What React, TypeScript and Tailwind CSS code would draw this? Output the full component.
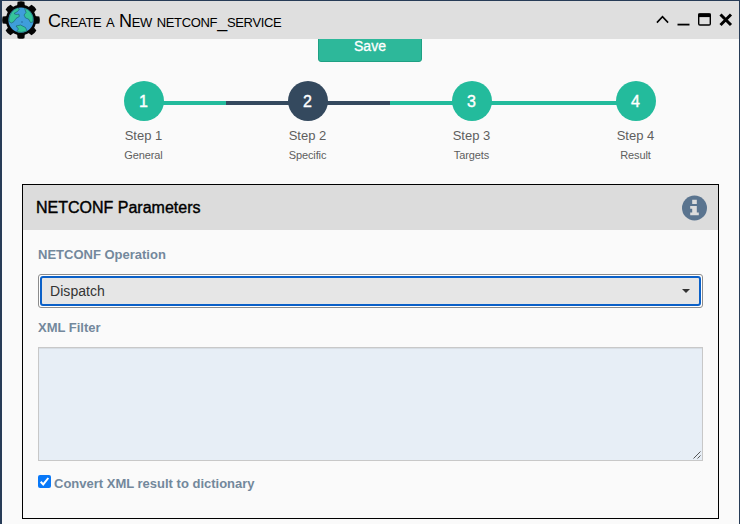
import React from "react";

type Step = { n: number; title: string; caption: string; left: string; right: string; dot: string };

const steps: Step[] = [
  { n: 1, title: "Step 1", caption: "General", left: "bg-transparent", right: "bg-[#23bb9c]", dot: "bg-[#23bb9c]" },
  { n: 2, title: "Step 2", caption: "Specific", left: "bg-[#34495e]", right: "bg-[#34495e]", dot: "bg-[#34495e]" },
  { n: 3, title: "Step 3", caption: "Targets", left: "bg-[#23bb9c]", right: "bg-[#23bb9c]", dot: "bg-[#23bb9c]" },
  { n: 4, title: "Step 4", caption: "Result", left: "bg-[#23bb9c]", right: "bg-transparent", dot: "bg-[#23bb9c]" },
];

function GearGlobe() {
  return (
    <svg className="block h-[38px] w-[38px] shrink-0" viewBox="0 0 38 38">
      <g fill="#050505">
        {[0, 45, 90, 135, 180, 225, 270, 315].map((a) => (
          <path key={a} d="M15 6 L15.6 0.7 Q19 -0.3 22.4 0.7 L23 6 Z" transform={`rotate(${a} 19 19)`} />
        ))}
        <circle cx="19" cy="19" r="15.2" />
      </g>
      <circle cx="19" cy="19" r="12.6" fill="#3f9edb" />
      <g fill="#35c49c" stroke="#1d5a6c" strokeWidth="0.6">
        <path d="M7 17.5 Q8.5 9.5 15.5 7 L17.5 8 L15.5 10.5 L12 12.5 L14 13.5 L17 13.2 L17.3 15.5 L14 17.5 L12 20.5 L9.5 22 L7 20.5 Z" />
        <path d="M22.5 7 Q29 9.5 31 16 L31 21 L28.5 21.5 L26.5 18 L23.5 17 L22 14 L24 11.5 Z" />
        <path d="M14 25 L18.5 24 L23.5 26.5 L25 30 Q19 32.5 14.5 30.5 L16.5 28 Z" />
      </g>
      <circle cx="20" cy="21" r="0.8" fill="#24699d" />
    </svg>
  );
}

function WindowControls() {
  return (
    <svg className="ml-auto block h-[38px] w-[80px] shrink-0" viewBox="656 1 80 38" fill="none" stroke="#000">
      <path d="M656.9 22.6 L662.5 16.7 L668.1 22.6" strokeWidth="1.6" />
      <path d="M677.5 24.6 H689.5" strokeWidth="1.8" />
      <rect x="698.7" y="14" width="11.6" height="11" rx="1.2" strokeWidth="1.4" />
      <path d="M698.3 15.3 H710.7" strokeWidth="3.6" />
      <path d="M720.5 14.5 L731 25 M731 14.5 L720.5 25" strokeWidth="3" />
    </svg>
  );
}

export default function App() {
  return (
    <div className="flex h-[524px] w-[740px] flex-col overflow-hidden border-t border-r border-l-2 border-[#273c57] bg-[#fafafa] font-['Liberation_Sans',Arial,sans-serif]">
      <header className="flex h-[38px] shrink-0 items-center bg-[#dfdfdf] pr-[3px]">
        <GearGlobe />
        <h1 className="ml-[8px] pt-[2px] text-[18px] leading-[22px] tracking-[-0.33px] whitespace-nowrap text-black [font-variant:small-caps]">
          Create a New netconf_service
        </h1>
        <WindowControls />
      </header>

      <div className="flex h-[23px] shrink-0 justify-center overflow-hidden pr-px">
        <button className="-mt-[10px] h-[33px] w-[104px] rounded-[3px] border border-[#1fa083] bg-[#2db89a] text-[14px] leading-[30px] text-white [-webkit-text-stroke:0.3px_white]">
          Save
        </button>
      </div>

      <ol className="mt-[19px] ml-[60px] flex shrink-0">
        {steps.map((s) => (
          <li key={s.n} className="flex w-[164px] flex-col items-center text-[#5e5e5e]">
            <div className="flex w-full items-center">
              <span className={`mt-[4px] -mr-px h-[4px] flex-1 ${s.left}`} />
              <span className={`flex h-[40px] w-[40px] items-center justify-center rounded-full pt-px pr-px text-[16px] text-white [-webkit-text-stroke:0.4px_white] ${s.dot}`}>
                {s.n}
              </span>
              <span className={`mt-[4px] -ml-px h-[4px] flex-1 ${s.right}`} />
            </div>
            <span className="mt-[6px] pr-px text-[13px] leading-[18px]">{s.title}</span>
            <span className="mt-[2px] pr-px text-[11px] leading-[16px] tracking-[-0.1px]">{s.caption}</span>
          </li>
        ))}
      </ol>

      <section className="mt-[21px] ml-[20px] h-[335px] w-[697px] shrink-0 border border-black">
        <div className="flex h-[45px] items-center justify-between bg-[#dcdcdc] pr-[11px] pl-[13px]">
          <h2 className="text-[16px] text-black [-webkit-text-stroke:0.4px_black]">NETCONF Parameters</h2>
          <svg className="h-[26px] w-[26px]" viewBox="0 0 26 26">
            <circle cx="13.5" cy="13" r="12.5" fill="#5a748f" />
            <path fill="#dcdcdc" d="M11.2 4.8 h4.6 v4.2 h-4.6z M9.2 11 h6.6 v6.6 h2 v2.7 h-8.6 v-2.7 h2 v-3.9 h-2z" />
          </svg>
        </div>
        <div className="flex flex-col px-[15px] pt-[16px] text-[13px] leading-[18px] font-bold text-[#73889c]">
          <label>NETCONF Operation</label>
          <div className="mt-[10px] h-[34px] w-[665px] rounded-[3px] border border-[#8c8c8c] bg-white p-px">
            <div className="flex h-full items-center justify-between rounded-[3px] border-2 border-[#0a60c8] bg-[#e6e6e6] pr-[9px] pl-[8px] text-[14px] font-normal text-[#333]">
              <span className="tracking-[0.06px]">Dispatch</span>
              <span className="h-0 w-0 border-x-4 border-t-4 border-x-transparent border-t-[#333]" />
            </div>
          </div>
          <label className="mt-[11px]">XML Filter</label>
          <div className="mt-[10px] flex h-[114px] w-[665px] items-end justify-end border border-[#c8c8c8] bg-[#e7eef6] shadow-[inset_0_1px_1px_rgba(0,0,0,0.075)]">
            <svg className="h-[9px] w-[9px]" viewBox="0 0 9 9" stroke="#444" strokeWidth="0.9">
              <path d="M0.5 7.5 L7.5 0.5 M4.5 7.5 L7.5 4.5" />
            </svg>
          </div>
          <label className="mt-[14px] flex items-start">
            <svg className="mr-[3px] h-[13px] w-[13px]" viewBox="0 0 13 13">
              <rect width="13" height="13" rx="2" fill="#0878f8" />
              <path d="M2.7 6.8 L5.2 9.4 L10.3 3" fill="none" stroke="white" strokeWidth="2" />
            </svg>
            <span>Convert XML result to dictionary</span>
          </label>
        </div>
      </section>
    </div>
  );
}
